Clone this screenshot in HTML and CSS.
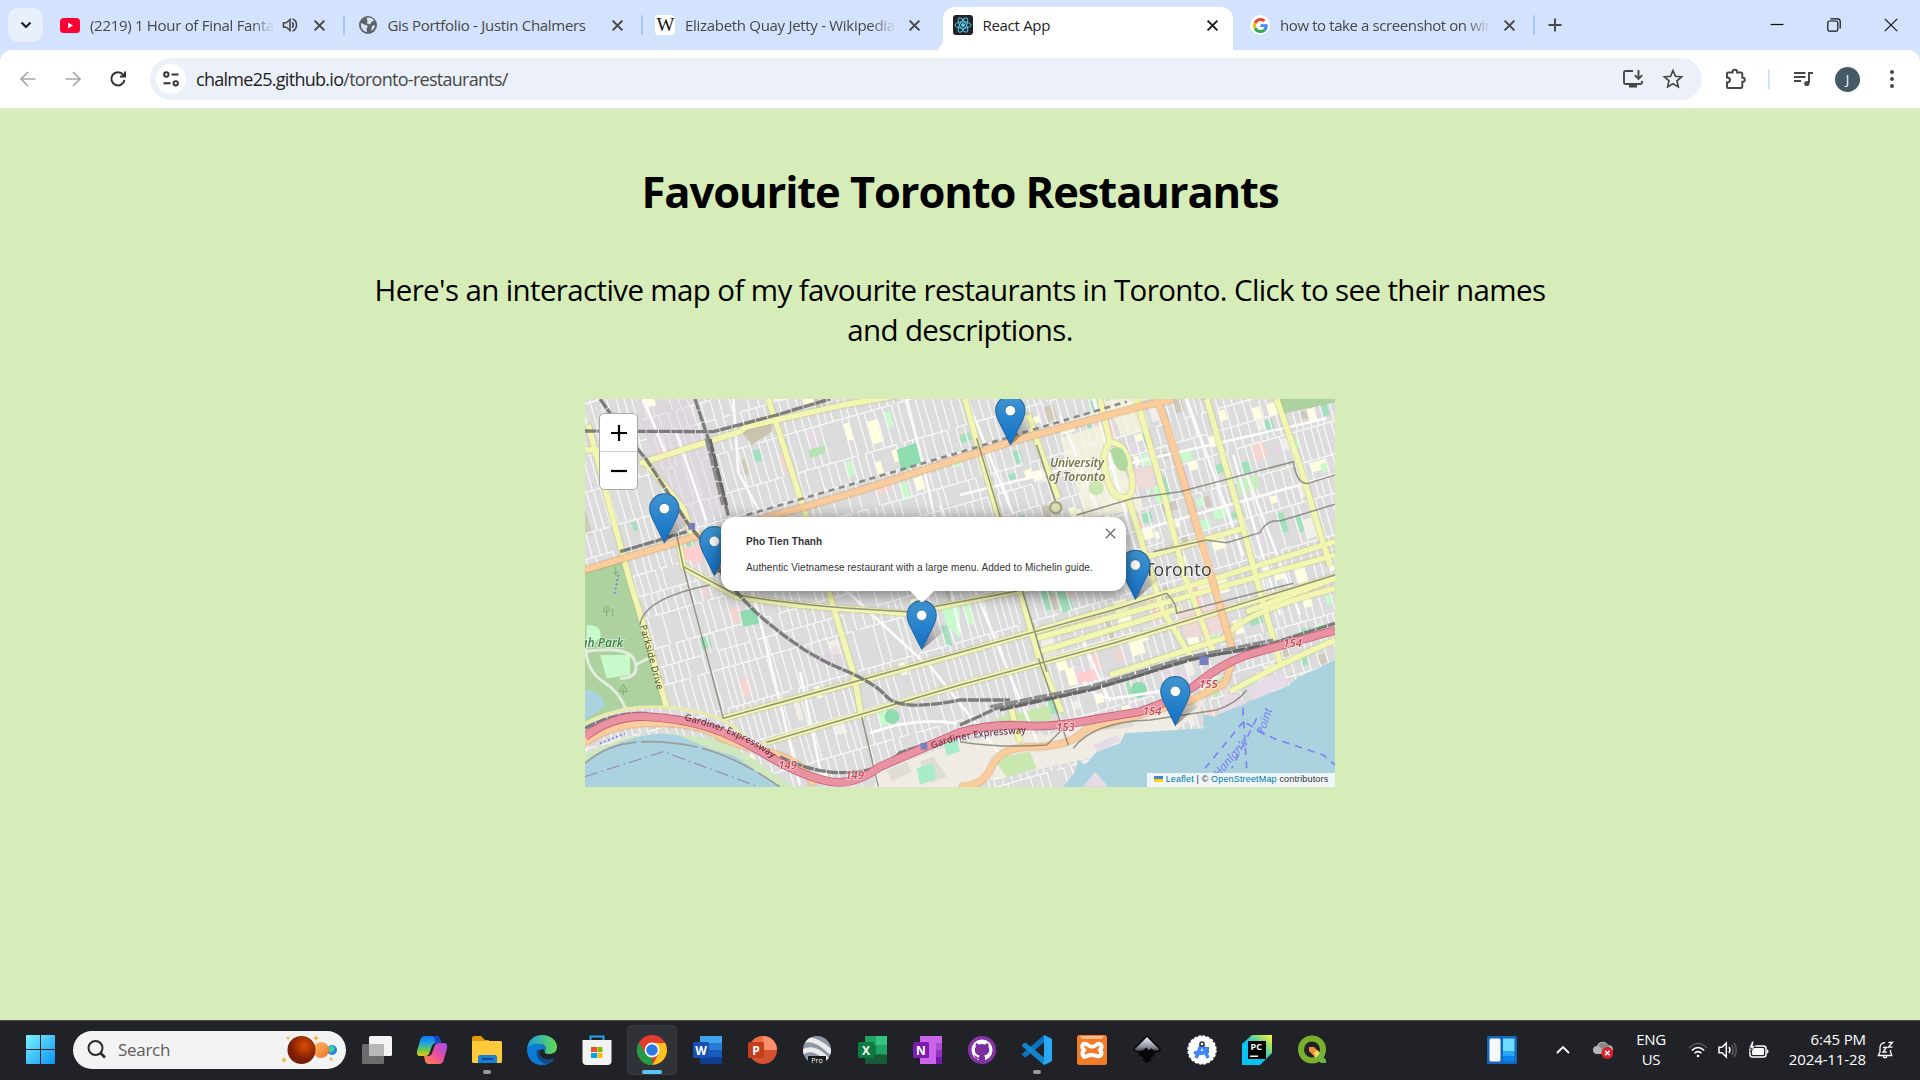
FILE: index.html
```html
<!DOCTYPE html>
<html lang="en">
<head>
<meta charset="utf-8">
<title>React App</title>
<link rel="stylesheet" href="styles.css">
</head>
<body>
<svg class="defs" width="0" height="0" aria-hidden="true">
  <defs>
    <symbol id="x" viewBox="0 0 12 12"><path d="M1.5 1.5l9 9M10.5 1.5l-9 9" fill="none" stroke="currentColor" stroke-width="1.9"/></symbol>
    <linearGradient id="pinfill" x1="0" y1="0" x2="0" y2="1"><stop offset="0" stop-color="#3f96d2"/><stop offset="1" stop-color="#126fc6"/></linearGradient>
    <linearGradient id="pinline" x1="0" y1="0" x2="0" y2="1"><stop offset="0" stop-color="#2e6c97"/><stop offset="1" stop-color="#2367ac"/></linearGradient>
    <linearGradient id="shade" x1="0" y1="1" x2="1" y2="0"><stop offset="0" stop-color="#000" stop-opacity=".45"/><stop offset=".75" stop-color="#000" stop-opacity="0"/></linearGradient>
    <symbol id="pin" viewBox="0 0 50 42" overflow="visible">
      <path d="M12.5 41L22 20Q32 8 37 15Q38 20 28 28Z" fill="url(#shade)"/>
      <path d="M12.5.5C5.8.5.5 5.8.5 12.6c0 2.700 1.200 5.900 2.300 8.400L12.500 40.500 22.200 21c1.100-2.500 2.300-5.700 2.300-8.400C24.500 5.800 19.200.5 12.500.5z" fill="url(#pinfill)" stroke="url(#pinline)"/>
      <circle cx="12.500" cy="12.600" r="4.300" fill="#fff" stroke="#2e6c97" stroke-width=".6"/>
    </symbol>
    <linearGradient id="win" x1="0" y1="0" x2="1" y2="1"><stop offset="0" stop-color="#7df3ff"/><stop offset="1" stop-color="#0a94f5"/></linearGradient>
  </defs>
</svg>

<header class="tabstrip">
  <button class="tab-search"><svg width="12" height="12" viewBox="0 0 12 12"><path d="M1.500 3.500L6 8l4.500-4.500" fill="none" stroke="#1f1f1f" stroke-width="2.200"/></svg></button>
  <div class="tab">
    <span class="fav"><svg width="20" height="15" viewBox="0 0 20 15"><rect width="20" height="15" rx="3.500" fill="#ff0033"/><path d="M8 4.500v6l5-3z" fill="#fff"/></svg></span>
    <span class="tab-title short fade">(2219) 1 Hour of Final Fantasy</span>
    <svg class="audio" width="16" height="16" viewBox="0 0 16 16" fill="none" stroke="#474747" stroke-width="1.600"><path d="M1.500 5.800h2.800L8 2.500v11L4.300 10.200H1.500zM10.300 5.300q2 2.700 0 5.400M10.500 2q4 1.500 4 6t-4 6"/></svg>
    <svg class="close" width="13" height="13"><use href="#x"/></svg>
  </div>
  <div class="tab">
    <span class="fav"><svg width="18" height="18" viewBox="0 0 18 18"><circle cx="9" cy="9" r="9" fill="#5f6368"/><path d="M2 7c2 .5 3 2 5 2 2.500 0 1.500 3 .5 3.500L8 16C4 15.500 1.500 12 2 7zM7.500 2c3-1 6 0 7.500 2.500L12.500 6 11 8.500 8 7.500 8.500 5z M13 10l3-1c0 3-2 5-4 6z" fill="#d3e3fd"/></svg></span>
    <span class="tab-title">Gis Portfolio - Justin Chalmers</span>
    <svg class="close" width="13" height="13"><use href="#x"/></svg>
  </div>
  <div class="tab nosep">
    <span class="fav wiki">W</span>
    <span class="tab-title fade">Elizabeth Quay Jetty - Wikipedia</span>
    <svg class="close" width="13" height="13"><use href="#x"/></svg>
  </div>
  <div class="tab active nosep">
    <span class="fav react"><svg width="18" height="18" viewBox="-9 -9 18 18" fill="none" stroke="#61dafb" stroke-width=".9"><circle r="1.400" fill="#61dafb"/><ellipse rx="8" ry="3.200"/><ellipse rx="8" ry="3.200" transform="rotate(60)"/><ellipse rx="8" ry="3.200" transform="rotate(120)"/></svg></span>
    <span class="tab-title">React App</span>
    <svg class="close" width="13" height="13"><use href="#x"/></svg>
  </div>
  <div class="tab">
    <span class="fav google"><svg width="15" height="15" viewBox="0 0 48 48"><path fill="#ea4335" d="M24 9.500c3.500 0 6.700 1.200 9.200 3.600l6.900-6.900C35.900 2.400 30.500 0 24 0 14.600 0 6.500 5.400 2.600 13.200l8 6.200C12.400 13.700 17.700 9.500 24 9.500z"/><path fill="#4285f4" d="M47 24.600c0-1.600-.2-3.100-.4-4.600H24v9h12.900c-.6 3-2.300 5.500-4.800 7.200l7.700 6C44.400 38 47 31.800 47 24.600z"/><path fill="#fbbc05" d="M10.500 28.600a14.500 14.500 0 0 1 0-9.200l-8-6.200a24 24 0 0 0 0 21.600z"/><path fill="#34a853" d="M24 48c6.500 0 11.900-2.100 15.900-5.800l-7.700-6c-2.200 1.500-4.900 2.300-8.200 2.300-6.300 0-11.600-4.200-13.500-9.900l-8 6.200C6.500 42.600 14.600 48 24 48z"/></svg></span>
    <span class="tab-title tight fade">how to take a screenshot on windows</span>
    <svg class="close" width="13" height="13"><use href="#x"/></svg>
  </div>
  <svg class="newtab" width="14" height="14" viewBox="0 0 14 14"><path d="M7 .5v13M.5 7h13" stroke="#474747" stroke-width="1.900"/></svg>
  <div class="winbtns">
    <svg width="14" height="14" viewBox="0 0 14 14"><path d="M.5 6.500h13" stroke="#111" stroke-width="1.200"/></svg>
    <svg width="14" height="14" viewBox="0 0 14 14" fill="none" stroke="#111" stroke-width="1.200"><rect x=".8" y="3" width="10" height="10.200" rx="1.800"/><path d="M3.500.8h7q2.700 0 2.700 2.700v7"/></svg>
    <svg width="14" height="14" viewBox="0 0 14 14"><path d="M.8.8l12.400 12.400M13.200.8L.8 13.200" stroke="#111" stroke-width="1.200"/></svg>
  </div>
</header>

<nav class="toolbar">
  <div class="navbtns">
    <svg width="20" height="20" viewBox="0 0 20 20" fill="none" stroke="#a8a8a8" stroke-width="1.700"><path d="M17.500 10H3M10 3l-7 7 7 7"/></svg>
    <svg width="20" height="20" viewBox="0 0 20 20" fill="none" stroke="#a8a8a8" stroke-width="1.700"><path d="M2.500 10H17M10 3l7 7-7 7"/></svg>
    <svg width="20" height="20" viewBox="0 0 20 20" fill="none" stroke="#333" stroke-width="2"><path d="M16.500 11A6.600 6.600 0 1 1 15 5.500l1.800 1.900M17 2.500v5h-5"/></svg>
  </div>
  <div class="omnibox">
    <span class="siteinfo"><svg width="18" height="18" viewBox="0 0 18 18" fill="none" stroke="#333" stroke-width="1.900"><circle cx="4.300" cy="4.500" r="2.200"/><path d="M9.500 4.500h7M1.500 13.300h7"/><circle cx="13.700" cy="13.300" r="2.200"/></svg></span>
    <span class="url">chalme25.github.io<i>/toronto-restaurants/</i></span>
    <svg class="install" width="22" height="22" viewBox="0 0 22 22" fill="none" stroke="#474747" stroke-width="1.900"><path d="M11 3H3.500Q2 3 2 4.500v10Q2 16 3.500 16h15q1.500 0 1.500-1.500V13M16.500 2v8.500M12.800 7.200l3.700 3.700 3.700-3.700"/><path d="M7 16h8v3.500H7z" fill="#474747" stroke="none"/></svg>
    <svg width="22" height="22" viewBox="0 0 22 22" fill="none" stroke="#474747" stroke-width="1.700"><path d="M11 2.700l2.500 5.600 6.100.6-4.600 4 1.300 6L11 15.800l-5.300 3.100 1.300-6-4.600-4 6.100-.6z"/></svg>
  </div>
  <svg class="puzzle" width="24" height="24" viewBox="0 0 24 24" fill="none" stroke="#474747" stroke-width="2"><path d="M4 5.500h4.500V5a2.300 2.300 0 0 1 4.600 0v.5H17q1.300 0 1.300 1.300v4h.5a2 2 0 0 1 0 4h-.5v4.900q0 1.300-1.300 1.300H4q-1 0-1-1v-4.500q3-.2 3-2.500T3 10.500V6.500q0-1 1-1z"/></svg>
  <span class="tsep"></span>
  <svg class="media" width="20" height="20" viewBox="0 0 20 20" fill="none" stroke="#474747" stroke-width="2"><path d="M1 4h11.500M1 8h11.500M1 12h7M16 14V4h4"/><circle cx="13.800" cy="14.500" r="2.600" fill="#474747" stroke="none"/></svg>
  <span class="avatar">J</span>
  <svg class="dots" width="6" height="20" viewBox="0 0 6 20" fill="#474747"><circle cx="3" cy="3" r="2"/><circle cx="3" cy="10" r="2"/><circle cx="3" cy="17" r="2"/></svg>
</nav>

<main class="page">
  <h1>Favourite Toronto Restaurants</h1>
  <p class="lead">Here's an interactive map of my favourite restaurants in Toronto. Click to see their names<br>and descriptions.</p>
  <section class="map">
    <svg class="tiles" width="750" height="388" viewBox="15 12 2250 1164">
      <g class="base">
      <rect x="0" y="0" width="2300" height="1200" fill="#e3e1de"/>
      <g id="streets" transform="rotate(-16)"></g>
      <g fill="#f7f6df" opacity=".8"><path d="M1440 130l120-40 130 250-170 30z"/><path d="M1570 20l110-20 30 100-80 20z"/></g>
      <g fill="#efdada"><path d="M1660 225l60-15 5 70-50 5z"/><path d="M1790 650l150-30 10 90-130 20z"/><path d="M310 460l60-15-5 60-50-10z" fill="#ffcfcf"/><path d="M1490 835l60-15 10 30-60 18z" fill="#ffcfcf"/></g>
      <g fill="#8fdcb0"><path d="M950 165l65-25 15 60-65 30z"/><path d="M480 650l55-15 5 50-50 10z"/><path d="M685 165l50-15v25l-45 15z" fill="#b6e3b6"/><path d="M1085 640l55-20v110l-40-40z" fill="#c8facc"/><path d="M1970 255l60-15 10 40-65 20z" fill="#c8f0c0"/><path d="M2090 12h175v10l-160 35z" fill="#aed1a0"/><circle cx="1677" cy="885" r="24"/><circle cx="936" cy="965" r="22"/></g>
      <path d="M485 110l90-28v28l-60 40z" fill="#c9c3b0"/>
      <path d="M170 40l150-28 130 330-160 60zM700 800l70-50 30 60z" fill="#e0d3e0" opacity=".5"/>
      <path d="M900 1130q300-130 500-110l250-60 220-70-10 60-130 100-300 60-300 66H880z" fill="#f0ece4"/>
      <path d="M1250 970l160-40 10 60-190 10zM1240 1090l110-20 20 50-90 25zM1870 880l60-40-20 70z" fill="#c8e8b0"/>
      <g fill="#e0dcd6"><path d="M920 1125l60-25 15 30-60 30zM1020 1100l40-15 40 60-50 20zM1570 985l90-20v30l-85 10zM1790 940l50-20 10 20-50 20z"/></g>
      <g fill="#a8ecc8"><path d="M1010 1120l50-15 10 45-50 20zM1090 1040l40-12 10 40-40 15z"/></g>
      <path d="M15 530L125 500 180 690 240 880 258 940 140 935 60 960 15 985z" fill="#aed1a0"/>
      <path d="M20 690q50 0 40 40l-40 30zM60 780h90v60l-70 10z" fill="#c8facc"/>
      <g fill="none" stroke="#e3eddd" stroke-width="9"><path d="M15 770Q150 750 165 800T120 850M15 750Q20 830 70 860T140 950M165 810l40-20"/></g>
      <g fill="none" stroke="#85ad78" stroke-width="3"><path d="M107 515v25m-8-10q8 10 16 0M80 640v25m-8-15q-2-15 8-15t8 15zM98 640v25M130 900v-20m-12 10l12-22 12 22z"/></g>
      <path d="M15 885q50 0 60 50l-60 40z" fill="#aad3df"/>
      <path d="M15 1075l130-50 120-10 160 20 100 60 120 85H15z" fill="#cfe8bd"/>
      <path d="M15 1100Q60 1060 160 1030T330 1035 460 1080L600 1176H15z" fill="#aad3df"/>
      <path d="M2265 795l-115 55-20 20-110 45-30 10-90 40-30-8v43l-235 15-15 30-70 25-35 40-20-15-10 35-35 46H2265z" fill="#aad3df"/>
      <path d="M2020 915l-20-35 95-50 40 30zM1940 880l60 45-80 30zM1510 1175l35-45 40 45zM1540 1050l70-30 15 15-70 35z" fill="#e6dbe6"/>
      <path d="M15 1105Q90 1040 200 1040T400 1070 600 1176" fill="none" stroke="#9c9c9c" stroke-width="5" stroke-dasharray="170 14"/>
      <path d="M15 1145L250 1070 535 1175" fill="none" stroke="#9b91c0" stroke-width="4" stroke-dasharray="40 12 5 12"/>
      <path d="M60 1045l75-30M115 540l-12 60" fill="none" stroke="#6779e8" stroke-width="5" stroke-dasharray="5 8"/>
      <g fill="none" stroke="#7f84ef" stroke-width="5" stroke-dasharray="22 18"><path d="M1875 1120L1990 980 1988 930 2000 1120M2000 985L2080 1030 2230 1080 2265 1110M2030 970l-75 150"/></g>

      <g class="road minor"><path d="M190 12l65 160M460 12l15 220 70 130M980 12l50 200 110 500M285 100l95 280M490 470l170 700M660 830l70 340M770 560l270 250M1180 60l120 300M1080 330l300 730M1440 60l120 300M1540 12l140 500M1820 12l170 470M1960 180l140 480M1140 300l400-100M1540 230l700-160M2000 240l160 420M1500 720l90 200M1800 880l-200 30q-60 0-90-50M2265 240l-600 170M870 1015q130-50 260-30M880 1100l15 76M1040 800l230 290"/></g>
      <g class="road yellow">
        <path d="M15 165h50M25 90L80 300 150 560 200 720 260 940M180 205L480 110 500 95 790 30 960 0M565 12l110 340 90 300 60 200 20 120M190 195L310 340 340 430"/>
        <path d="M1155 12l30 110 70 240 120 420 70 170M1345 60l30 90 60 160M1560 12l30 130q50 0 60 80 20 70-10 85-40 10-60-60-20-70 10-105M1645 310l100 330 90 150M1670 12l80 280 60 240 90 240M1880 12l100 350 60 230 60 210M2090 12l70 200 90 300"/>
        <path d="M430 970L1140 775 1600 640 1940 540 2265 440M560 1042L1140 870 1600 745 2265 545M1370 730L2265 480M1380 770L1800 640M1590 840L1960 720M2265 735L2100 810 1950 890M1290 930l30 110M1650 500L1990 400M295 430l15 85 160 90 180 25 330 25 400-80M2000 650l265-100M1930 730q60-80 335-150"/>
      </g>
      <g class="road ramp"><path d="M15 985Q140 920 290 940T480 1015 560 1042L600 1035"/></g>
      <g class="road orange">
        <path d="M15 525L330 430 660 340 830 290 1140 190 1310 135 1660 40 1780 12M1730 12l30 78 60 200 50 170 40 140 45 155"/>
        <path d="M15 1045Q90 985 220 985T400 1015 560 1070 700 1170M1140 1175q70 0 95-60t130-60 150-50l180-50 140-40 100-50 20-60"/>
      </g>
      <g class="tram"><path d="M290 420l20 95 120 455M310 515l160 85q200 35 510 50l400-75 210-65 70-20M1140 550l400-100 M180 690q10-80 210-120M430 970l700-195 470-130 160-50q30 30 30 60l350-90M560 1042L1140 870 1600 745 2265 540M845 965l50 210M1190 130l210 700M1370 150l60 180M1375 790l90 260M1490 360L1660 310 1800 290 2140 200q10 70 45 65l80-25M1720 470l160-35 60 8 100-30q20-40 60-35l165-50M1140 1040q120 20 260 10l60-60M1480 1060q60-80 230-85l200-30q60-20 90-60"/></g>
      <g class="rail">
        <path d="M60 12L130 110 200 195 330 395 360 430M345 12l40 120 60 230M15 108L400 110 590 60 750 12M120 470l200-60M360 430Q440 580 560 680T780 820 920 905 1140 915H1290M1140 990l110-50 200-40 200-50 180-60 200-30 235-75M15 1000Q110 950 200 955M600 1085q100 50 200 48t160-60l180-60"/>
      </g>
      <g class="yard"><path d="M378 130l50 200M1230 935l300-60 290-88 260-52"/></g>
      <g class="yard dark"><path d="M390 132l50 200M1260 945l280-62 290-88 220-45"/></g>
      <path d="M500 360L1140 172 1340 110 1640 20" fill="none" stroke="#8d8a85" stroke-width="8" stroke-dasharray="18 14"/>
      <path class="hw-case" d="M15 1025Q100 960 200 965T380 995 560 1080 740 1158 900 1115L1140 1012Q1240 985 1330 992T1560 970L1680 950Q1800 910 1860 860T2000 780L2265 706"/>
      <path class="hw" d="M15 1025Q100 960 200 965T380 995 560 1080 740 1158 900 1115L1140 1012Q1240 985 1330 992T1560 970L1680 950Q1800 910 1860 860T2000 780L2265 706"/>
      <g fill="#7880bb"><rect x="325" y="384" width="20" height="20"/><rect x="1022" y="1044" width="20" height="20"/><rect x="1858" y="784" width="28" height="26"/></g>
      <circle cx="1427" cy="338" r="17" fill="#e0e0b8" stroke="#a9a984" stroke-width="7"/>
      <circle cx="1548" cy="278" r="23" fill="#c8e8b0"/>
      <path d="M1590 165q30-20 45 10t5 50q-20 10-35-15z" fill="#aed9a0"/>

      <defs>
        <path id="parkside" d="M180 692L232 886"/>
        <path id="gard1" d="M313 976Q470 1010 585 1095"/>
        <path id="gard2" d="M1058 1062Q1130 1025 1345 1014"/>
      </defs>
      <g class="label">
        <text class="uni" x="1491" y="215" text-anchor="middle" textLength="162">University</text>
        <text class="uni" x="1491" y="259" text-anchor="middle" textLength="170">of Toronto</text>
        <text class="city" x="1694" y="543" textLength="201">Toronto</text>
        <text class="park" x="-34" y="755" textLength="164">High Park</text>
        <text class="street"><textPath href="#parkside" textLength="200">Parkside Drive</textPath></text>
        <text class="street red"><textPath href="#gard1" textLength="290">Gardiner Expressway</textPath></text>
        <text class="street red"><textPath href="#gard2" textLength="286">Gardiner Expressway</textPath></text>
        <text class="exit" x="595" y="1123">149</text><text class="exit" x="796" y="1153">149</text>
        <text class="exit" x="1428" y="1009">153</text><text class="exit" x="1688" y="960">154</text>
        <text class="exit" x="1857" y="880">155</text><text class="exit" x="2110" y="757">154</text>
        <text class="ferry" transform="translate(1916 1150) rotate(-50)">Hanlan's</text>
        <text class="ferry" transform="translate(2052 1022) rotate(-72)">Point</text>
      </g>
      </g>
      <g>
        <use href="#pin" x="1245.500" y="1" width="182" height="153"/>
        <use href="#pin" x="207.500" y="295" width="182" height="153"/>
        <use href="#pin" x="357.500" y="393" width="182" height="153"/>
        <use href="#pin" x="1620.500" y="464" width="182" height="153"/>
        <use href="#pin" x="979.500" y="615" width="182" height="153"/>
        <use href="#pin" x="1740.500" y="843" width="182" height="153"/>
      </g>
    </svg>
    <div class="zoom"><span><svg width="16" height="16"><path d="M0 8h16M8 0v16" stroke="#000" stroke-width="2.200"/></svg></span><span><svg width="16" height="16"><path d="M0 8h16" stroke="#000" stroke-width="2.200"/></svg></span></div>
    <div class="popup">
      <svg class="popclose" width="11" height="11" viewBox="0 0 11 11"><path d="M.8.8l9.400 9.400M10.200.8L.8 10.200" stroke="#757575" stroke-width="1.500"/></svg>
      <strong>Pho Tien Thanh</strong>
      <p>Authentic Vietnamese restaurant with a large menu. Added to Michelin guide.</p>
      <span class="tip"></span>
    </div>
    <div class="attribution"><svg width="9" height="6"><path fill="#4c7be1" d="M0 0h9v3H0z"/><path fill="#ffd500" d="M0 3h9v3H0z"/></svg> <a>Leaflet</a> | © <a>OpenStreetMap</a> contributors</div>
  </section>
</main>

<footer class="taskbar">
  <svg class="start" width="29" height="29" viewBox="0 0 29 29" fill="url(#win)"><path d="M1 0h13v14H0V1q0-1 1-1zM15 0h13q1 0 1 1v13H15zM0 15h14v14H1q-1 0-1-1zM15 15h14v13q0 1-1 1H15z"/></svg>
  <div class="search">
    <svg width="19" height="19" viewBox="0 0 19 19" fill="none" stroke="#2b2b2b" stroke-width="2"><circle cx="8.500" cy="8" r="7"/><path d="M13.500 13l4.500 4.500" stroke-width="2.600"/></svg>
    <span>Search</span>
    <svg class="planets" width="56" height="30" viewBox="0 0 56 30"><defs><radialGradient id="mars" cx=".6" cy=".35"><stop offset="0" stop-color="#e04d00"/><stop offset="1" stop-color="#7a1d05"/></radialGradient><linearGradient id="sun" x1="0" x2="1" y2="1"><stop offset="0" stop-color="#ffc560"/><stop offset="1" stop-color="#ee6a2c"/></linearGradient></defs><circle cx="51" cy="15" r="5" fill="#2c7fe0"/><path d="M47 13q4-5 7 0l-1 3-4 2z" fill="#3ad0a0"/><circle cx="40" cy="15" r="8" fill="url(#sun)"/><circle cx="20.500" cy="15" r="14" fill="url(#mars)"/><path d="M3 22l1 2 2 1-2 1-1 2-1-2-2-1 2-1zM35 0l1 2 2 1-2 1-1 2-1-2-2-1 2-1zM7 1l.7 1.300L9 3l-1.300.7L7 5l-.7-1.300L5 3l1.300-.7zM50 22l.7 1.300L52 24l-1.300.7L50 27l-.7-2.300L48 24l1.300-.7z" fill="#e9b93c"/></svg>
  </div>
  <div class="apps">
    <span class="app"><svg width="30" height="28" viewBox="0 0 30 28"><rect x="7" width="23" height="20" rx="1.500" fill="#f4f4f4"/><rect y="8" width="22" height="20" rx="1.500" fill="#7a7a7a" opacity=".85"/><path d="M7 8h15v12H7z" fill="#b8b8b8"/></svg></span>
    <span class="app"><svg width="30" height="28" viewBox="0 0 30 28"><defs><linearGradient id="cpa" x1="0" y1="0" x2="0" y2="1"><stop offset="0" stop-color="#1673e8"/><stop offset=".35" stop-color="#1aa5e8"/><stop offset=".7" stop-color="#6bc84c"/><stop offset="1" stop-color="#f2c413"/></linearGradient><linearGradient id="cpb" x1="1" y1="0" x2="0" y2="1"><stop offset="0" stop-color="#a04cf0"/><stop offset=".5" stop-color="#e94f9c"/><stop offset="1" stop-color="#ff8c3a"/></linearGradient></defs><path d="M8 0h12q2 0 3 3l1 4h-5q-3 0-4 3l-3 8q-1 2-4 2H3q-4 0-3-5L3 5q1-5 5-5z" fill="url(#cpa)"/><path d="M22 28H11q-2 0-3-3l-1-5h5q2 0 3-3l3-8q1-2 4-2h5q4 0 3 5l-3 11q-1 5-5 5z" fill="url(#cpb)"/><path d="M15 0h5q2 0 3 3l1 4h-4q-3 0-2-3 0-3-3-4z" fill="#1745c8"/></svg></span>
    <span class="app run"><svg width="30" height="27" viewBox="0 0 30 27"><path d="M0 2q0-2 2-2h7l4 4h4v6H0z" fill="#e39b0b"/><rect y="5" width="30" height="22" rx="1.500" fill="#ffc93c"/><path d="M6 21q0-2 2-2h15q2 0 2 2v6H6z" fill="#1c7fd6"/><path d="M10 22h11v2H10z" fill="#0b4f94"/></svg></span>
    <span class="app"><svg width="30" height="30" viewBox="0 0 30 30"><defs><linearGradient id="ea" x1="0" x2="1"><stop offset="0" stop-color="#1b9de2"/><stop offset="1" stop-color="#64dc50"/></linearGradient></defs><path d="M0 14C1 5 7 0 15 0c9 0 15 6 15 12 0 5-4 7-8 7-3 0-5-1-4-3 2-4-1-7-5-7-6 0-11 2-13 5z" fill="url(#ea)"/><path d="M0 14c2-4 7-6 12-5 5 0 7 3 6 7-2-3-6-2-6 2 0 5 5 8 10 7l5-1c-3 4-7 6-12 6C6 30 0 24 0 14z" fill="#0c7bd6"/><path d="M10 15c-2 6 2 12 9 14 4-1 7-4 8-6-6 3-14 1-15-5q0-3 2-4z" fill="#114a8b"/></svg></span>
    <span class="app"><svg width="30" height="30" viewBox="0 0 30 30"><path d="M8.500 7V1.500h13V7" fill="none" stroke="#22a8ea" stroke-width="2"/><path d="M.5 5h29v21q0 4-4 4h-21q-4 0-4-4z" fill="#f3f3f3"/><path d="M9 12h6v5H9z" fill="#f25022"/><path d="M15.500 12h5v5h-5z" fill="#7fba00"/><path d="M9 18h6v5H9z" fill="#00a4ef"/><path d="M15.500 18h5v5h-5z" fill="#ffb900"/></svg></span>
    <span class="app current"><svg width="30" height="30" viewBox="-15 -15 30 30"><circle r="15" fill="#e33b2e"/><path d="M-13-7.500L-6.500 3.800 0 7.500 1 15A15 15 0 0 1-13-7.500z" fill="#249a45"/><path d="M0-7h13.200A15 15 0 0 1 .5 15L6.500 3.800z" fill="#fcc31e"/><circle r="7.400" fill="#fff"/><circle r="5.800" fill="#2a7bea"/></svg></span>
    <span class="app"><svg width="29" height="28" viewBox="0 0 29 28"><path d="M7 0h22v7H7z" fill="#41a5ee"/><path d="M7 7h22v7H7z" fill="#2b7cd3"/><path d="M7 14h22v7H7z" fill="#185abd"/><path d="M7 21h22v7H7z" fill="#103f91"/><rect y="6" width="16" height="16" rx="1.500" fill="#1a50b4"/><text x="8" y="18.500">W</text></svg></span>
    <span class="app"><svg width="29" height="28" viewBox="0 0 29 28"><circle cx="15" cy="14" r="14" fill="#d35230"/><path d="M15 0a14 14 0 0 1 14 14H15z" fill="#ff8f6b"/><path d="M15 0A14 14 0 0 0 1 14h14z" fill="#ed6c47"/><rect y="6" width="16" height="16" rx="1.500" fill="#c43e1c"/><text x="8" y="18.500">P</text></svg></span>
    <span class="app"><svg width="28" height="28" viewBox="0 0 28 28"><defs><clipPath id="ec"><circle cx="14" cy="14" r="14"/></clipPath></defs><g clip-path="url(#ec)"><path d="M0 0h28v28H0z" fill="#8d97a5"/><path d="M-2 6Q10-2 30 18M-2 17Q12 7 28 28" fill="none" stroke="#ececec" stroke-width="5"/><path d="M5 20h18v8H5z" fill="#1a1a1a"/></g><text class="pro" x="14" y="26.500">Pro</text></svg></span>
    <span class="app"><svg width="29" height="28" viewBox="0 0 29 28"><path d="M7 0h11v9H7z" fill="#21a366"/><path d="M18 0h11v9H18z" fill="#33c481"/><path d="M7 9h22v10H7z" fill="#107c41"/><path d="M18 9h11v9H18z" fill="#21a366"/><path d="M7 19h22v9H7z" fill="#185c37"/><rect y="6" width="16" height="16" rx="1.500" fill="#0f7a40"/><text x="8" y="18.500">X</text></svg></span>
    <span class="app"><svg width="29" height="28" viewBox="0 0 29 28"><path d="M7 0h22v28H7z" fill="#ca64ea"/><path d="M23 7h6v7h-6z" fill="#ae4bd5"/><path d="M23 14h6v7h-6z" fill="#9332bf"/><path d="M23 21h6v7h-6z" fill="#7719aa"/><rect y="6" width="16" height="16" rx="1.500" fill="#7a1bae"/><text x="8" y="18.500">N</text></svg></span>
    <span class="app"><svg width="28" height="28" viewBox="0 0 28 28"><circle cx="14" cy="14" r="14" fill="#8534a8"/><circle cx="14" cy="14" r="10.500" fill="#fff"/><path d="M8 7l3 1.500q3-.8 6 0L20 7q1 2 .4 3.800 1.200 1.700.8 4-.7 4-5 4.600.8.800.8 2V26h-6v-3q-3 .5-4-2l-1-1.500q2-.3 3 1.500.8 1 2 .5 0-1.300.8-2-4.300-.6-5-4.700-.3-2.300 1-4Q7.400 9 8 7z" fill="#7b2f9d"/></svg></span>
    <span class="app run"><svg width="30" height="30" viewBox="0 0 30 30"><path d="M22 0v7.500L4 22q-1 .6-2 0L.5 20.500q-1-1 0-2z" fill="#0b74be"/><path d="M22 30v-7.500L4 8q-1-.6-2 0L.5 9.500q-1 1 0 2z" fill="#1186cf"/><path d="M22 0l7 3.300q1 .5 1 1.600v20.200q0 1.100-1 1.600L22 30q-2-2 0-4z" fill="#29a8f3"/></svg></span>
    <span class="app"><svg width="30" height="30" viewBox="0 0 30 30"><rect width="30" height="30" rx="2.500" fill="#f07c29"/><path d="M3 1h24l-2 3H5z" fill="#fbb98a"/><path d="M10 9.500c-5-3-6 3-3 5.500-3 4-1 8 3 6s6-1 10 0 6-2 3-6c3-3 1-8-3-5.500-4 3-6 3-10 0z" fill="none" stroke="#fff" stroke-width="4"/></svg></span>
    <span class="app"><svg width="28" height="28" viewBox="0 0 28 28"><defs><linearGradient id="ink" x1="0" y1="0" x2="0" y2="1"><stop offset="0" stop-color="#f2f2f7"/><stop offset=".7" stop-color="#8b8f9c"/><stop offset="1" stop-color="#333"/></linearGradient></defs><path d="M14 0q1 0 2 1l11 11q2 3-1 4-5 1-5 3t-4 3l2 2-5 3-5-3 2-2-6-3q3-2-1-3-5-1-3-4L12 1q1-1 2-1z" fill="#08080a"/><path d="M14 1l12.500 12.500q-5 3-8-1l-3 2-2-3-4 3q-4 2-8-1z" fill="url(#ink)"/></svg></span>
    <span class="app"><svg width="30" height="30" viewBox="0 0 30 30"><circle cx="15" cy="15" r="13.700" fill="#fff" stroke="#fff" stroke-width="2" stroke-dasharray="3 1.300"/><path d="M18 12h4v6h-4z" fill="#2ba24c"/><path d="M15 8L9 23M15 8l6 15M7 17q8 4 14-3" fill="none" stroke="#4285f4" stroke-width="3.600"/><circle cx="15" cy="9" r="2" fill="#fff" stroke="#333" stroke-width="1.500"/></svg></span>
    <span class="app"><svg width="30" height="30" viewBox="0 0 30 30"><defs><linearGradient id="pc" x1="0" y1="1" x2="1" y2="0"><stop offset=".45" stop-color="#07c3f2"/><stop offset=".8" stop-color="#a8e05f"/><stop offset="1" stop-color="#fcf84a"/></linearGradient></defs><path d="M10 0h20v18L18 30H0V9z" fill="url(#pc)"/><path d="M6 6h18v18H6z" fill="#000"/><path d="M8 20.500h8V22H8z" fill="#fff"/><text class="pc" x="14.300" y="15">PC</text></svg></span>
    <span class="app"><svg width="30" height="30" viewBox="0 0 30 30"><circle cx="15" cy="14.500" r="11" fill="none" stroke="#7ab02c" stroke-width="6"/><path d="M17 16l5 1 7 8v3h-5l-7-6z" fill="#6cb33f"/><path d="M12 12h5l5 5-4 5-6-6z" fill="#f0913a"/><path d="M17 18l3-3 3 3-4 5z" fill="#f3e05a"/></svg></span>
  </div>
  <div class="tray">
    <svg class="widgets" width="30" height="28" viewBox="0 0 30 28"><rect width="30" height="28" rx="1.500" fill="#1467ba"/><rect x="2.500" y="2.500" width="11" height="23" rx="1.500" fill="#f7f7f7"/><path d="M16 2.500h11.500V15H16z" fill="#6fdbff"/><path d="M16 15h11.500v5H16z" fill="#2aa6f7"/><path d="M16 20h11.500v5.500H16z" fill="#0a84ec"/></svg>
    <svg class="chev" width="14" height="9" viewBox="0 0 14 9"><path d="M1 8l6-6 6 6" fill="none" stroke="#fff" stroke-width="1.800"/></svg>
    <svg class="cloud" width="20" height="18" viewBox="0 0 20 18"><path d="M4 13a4 4 0 0 1 0-8 6 6 0 0 1 11-1 4 4 0 0 1 1 9z" fill="#b5b5b5"/><path d="M5 4.500a6 6 0 0 1 10-.5l2 2-8 2z" fill="#8a8a8a"/><circle cx="14.300" cy="12" r="6" fill="#d9212c"/><path d="M12 9.700l4.600 4.600M16.600 9.700L12 14.300" stroke="#fff" stroke-width="1.500"/></svg>
    <div class="lang">ENG<br>US</div>
    <svg class="wifi" width="20" height="16" viewBox="0 0 20 16" fill="none" stroke="#fff" stroke-width="1.600"><path d="M1 6q9-9 18 0" stroke="#5a5b5e"/><path d="M3.800 8.500q6.200-6 12.400 0M6.500 11.300q3.500-3.400 7 0"/><circle cx="10" cy="14" r="1.300" fill="#fff" stroke="none"/></svg>
    <svg class="vol" width="20" height="18" viewBox="0 0 20 18" fill="none" stroke="#fff" stroke-width="1.500"><path d="M1 6.300h3L8.300 2v14L4 11.700H1zM11 6q2 3 0 6"/><path d="M13.500 4q3.500 5 0 10M16 2q4.500 7 0 14" stroke="#5a5b5e"/></svg>
    <svg class="bat" width="21" height="17" viewBox="0 0 21 17"><rect x="2" y="5" width="16" height="11" rx="2.500" fill="#202227" stroke="#fff" stroke-width="1.500"/><rect x="4" y="7" width="12" height="7" rx="1" fill="#fff"/><path d="M19 8.500q1.500 0 1.500 2t-1.500 2z" fill="#fff"/><path d="M4 0L1 7h2.500L2.500 11 7.500 4.500H5L6 0z" fill="#fff" stroke="#202227" stroke-width=".8"/></svg>
    <div class="clock">6:45 PM<br>2024-11-28</div>
    <svg class="bell" width="17" height="18" viewBox="0 0 17 18" fill="none" stroke="#fff" stroke-width="1.300"><path d="M8 1.700Q3 2 3 7v4l-1.700 3.500h13.500L13.500 11V9M6 15.500q2 2.500 4 0M6 6.500h3.500L6 11h3.700M11.500 1.500h4l-4 4.700h4"/></svg>
  </div>
</footer>
<script src="map.js"></script>
</body>
</html>
```
FILE: styles.css
```css
* { box-sizing: border-box; }
body {
  margin: 0;
  width: 1920px;
  height: 1080px;
  overflow: hidden;
  display: flex;
  flex-direction: column;
  font-family: "Segoe UI", "Open Sans", "Noto Sans", sans-serif;
  background: #d7edb9;
}
svg { display: block; flex: none; }
.defs { position: absolute; }

/* Tab strip */
.tabstrip { height: 50px; background: #d3e3fd; display: flex; align-items: center; flex: none; }
.tab-search { width: 35px; height: 34px; margin: 0 2.5px 0 8px; border: 0; padding: 0; border-radius: 10px; background: #e9f0fd; display: flex; align-items: center; justify-content: center; }
.tab { position: relative; width: 297.5px; height: 50px; display: flex; align-items: center; padding: 0 17px 0 14.5px; color: #474747; }
.tab:not(.nosep)::after { content: ""; position: absolute; right: -2px; top: 15px; width: 2px; height: 20px; background: #a8c7fa; border-radius: 1px; }
.fav { width: 20px; height: 20px; display: flex; align-items: center; justify-content: center; margin-right: 10px; flex: none; }
.wiki { background: #fff; border-radius: 4px; font: 19px "Liberation Serif", serif; color: #111; letter-spacing: -1px; }
.react { background: #20232a; border-radius: 3px; }
.google { background: #fff; border-radius: 50%; }
.tab-title { width: 211px; margin-right: auto; overflow: hidden; white-space: nowrap; font-size: 15px; letter-spacing: -.3px; line-height: 24px; }
.tab-title.short { width: 184px; }
.tab-title.tight { letter-spacing: -.4px; }
.fade { -webkit-mask-image: linear-gradient(90deg, #000 88%, transparent); mask-image: linear-gradient(90deg, #000 88%, transparent); }
.audio { margin-right: 15px; }
.active { color: #1f1f1f; }
.active::before { content: ""; position: absolute; inset: 7px 3px 0 5px; background: #fff; border-radius: 12px 12px 0 0; }
.active > * { position: relative; z-index: 1; }
.active { background: radial-gradient(circle at 0 0, transparent 12px, #fff 12.5px) -7px 38px / 12px 12px no-repeat; }
.newtab { margin-left: 15px; }
.winbtns { margin-left: auto; display: flex; gap: 43px; padding-right: 22px; }

/* Toolbar */
.toolbar { position: relative; height: 59px; background: #fff; border-radius: 12px 12px 0 0; border-bottom: 1px solid #dfe5df; display: flex; align-items: center; flex: none; }
.toolbar::before { content: ""; position: absolute; inset: 0 0 40px; z-index: -1; background: #d3e3fd; }
.navbtns { display: flex; gap: 25px; padding-left: 17.5px; width: 150px; }
.omnibox { width: 1552px; height: 42px; border-radius: 21px; background: #ecf0f9; display: flex; align-items: center; padding: 0 18px 0 6px; gap: 18px; }
.siteinfo { width: 30px; height: 30px; border-radius: 50%; background: #fff; display: flex; align-items: center; justify-content: center; }
.url { margin-left: -8px; margin-right: auto; font-size: 18px; letter-spacing: -.72px; color: #1f1f1f; line-height: 28px; }
.url i { font-style: normal; color: #474747; }
.puzzle { margin-left: 22px; }
.tsep { width: 2px; height: 20px; background: #d3e3fd; margin: 0 23px 0 20px; }
.avatar { width: 25px; height: 25px; border-radius: 50%; background: #455a64; color: #fff; font: 13px/25px "Open Sans", sans-serif; text-align: center; margin: 0 29px 0 22px; }

/* Page */
.page { height: 911px; flex: none; display: flex; flex-direction: column; align-items: center; text-align: center; color: #000; }
h1 { margin: 53px 0 0; font-size: 43.5px; line-height: 60px; font-weight: 700; letter-spacing: -1.1px; }
.lead { margin: 48px 0 40px; font-size: 29.5px; line-height: 40px; letter-spacing: -.62px; white-space: nowrap; }
.map { position: relative; width: 750px; height: 388px; margin-top: 9px; overflow: hidden; font-family: "Liberation Sans", Arial, sans-serif; text-align: left; }

.base { filter: blur(1.2px); }
.road { fill: none; stroke-linejoin: round; }
.minor { stroke: #fbfbfb; stroke-width: 8; }
.yellow { stroke: #f3f6b0; stroke-width: 16; filter: drop-shadow(0 0 3px #b9ba78); }
.ramp { stroke: #e9eca8; stroke-width: 9; }
.orange { stroke: #fbcd9c; stroke-width: 18; filter: drop-shadow(0 0 3px #c98a48); }
.tram { fill: none; stroke: #7d7d70; stroke-width: 4.5; opacity: .8; }
.rail { fill: none; stroke: #6b6b6b; stroke-width: 10; stroke-dasharray: 34 3; opacity: .85; }
.yard { fill: none; stroke: #8d8d8d; stroke-width: 9; stroke-dasharray: 40 5; }
.dark { stroke: #666; }
.hw-case { fill: none; stroke: #c9607b; stroke-width: 26; }
.hw { fill: none; stroke: #e892a2; stroke-width: 21; }
.label { font-family: "Noto Sans", sans-serif; }
.label text { paint-order: stroke; stroke: rgba(255, 255, 255, .6); stroke-width: 5px; }
.uni { font-size: 36px; font-style: italic; font-weight: 600; fill: #77764c; }
.city { font-size: 53px; fill: #444; }
.park { font-size: 36px; font-style: italic; fill: #3e8a4c; font-weight: 600; }
.label .street { font-size: 28px; fill: #4b4b35; stroke: none; }
.label .red { fill: #5a2233; }
.exit { font-size: 34px; font-style: italic; font-weight: 600; fill: #c94c55; }
.label .ferry { font-size: 36px; font-style: italic; fill: #7d83ee; stroke: none; }
.street-line { fill: none; stroke: #f7f7f7; stroke-width: 4; }

.zoom { position: absolute; left: 14px; top: 14px; width: 39px; height: 77px; border: 1px solid #aaa9a5; border-radius: 5px; background: #fff; }
.zoom span { display: flex; height: 38px; align-items: center; justify-content: center; }
.zoom span:first-child { border-bottom: 1px solid #ccc; }
.popup { position: absolute; left: 136px; top: 118px; width: 405px; height: 74px; background: #fff; border-radius: 14px; box-shadow: 0 3px 16px rgba(0, 0, 0, .5); color: #333; font-size: 10px; line-height: 13px; padding: 18px 25px; }
.popup strong { display: block; letter-spacing: .1px; }
.popup p { margin: 13px 0 0; white-space: nowrap; letter-spacing: .075px; }
.popclose { position: absolute; right: 10px; top: 11px; }
.tip { position: absolute; left: 189px; top: 74px; width: 24px; height: 11px; background: #fff; clip-path: polygon(0 0, 100% 0, 54% 100%, 46% 100%); }
.attribution { position: absolute; right: 0; bottom: 0; width: 188px; height: 14px; padding-left: 7px; white-space: nowrap; background: rgba(255, 255, 255, .8); font-size: 9px; letter-spacing: .16px; line-height: 13px; color: #333; }
.attribution svg { display: inline-block; }
.attribution a { color: #0078a8; }

/* Taskbar */
.taskbar { height: 60px; flex: none; background: #202227; border-top: 1px solid #45484a; display: flex; align-items: center; color: #fff; padding-bottom: 2px; }
.start { margin: 0 18px 0 26px; }
.search { width: 273px; height: 38px; border-radius: 19px; background: #f3f3f3; display: flex; align-items: center; padding: 0 9px 0 14px; color: #5c5c5c; font-size: 17px; letter-spacing: -.3px; }
.search span { margin-left: 12px; }
.planets { margin-left: auto; }
.apps { display: flex; margin-left: 6px; }
.app { position: relative; width: 50px; height: 50px; margin-right: 5px; border-radius: 5px; display: flex; align-items: center; justify-content: center; }
.current { background: #2f3236; box-shadow: inset 0 0 0 1px #3a3d41; }
.run::after, .current::after { content: ""; position: absolute; bottom: 1px; left: 21px; width: 8px; height: 4px; border-radius: 2px; background: #9a9a9a; }
.current::after { left: 15px; width: 20px; background: #5ac4fb; }
.app text { fill: #fff; font: 700 12px "Open Sans", sans-serif; text-anchor: middle; }
.app .pro { font-size: 7px; font-weight: 400; }
.app .pc { font-size: 9px; }
.tray { margin-left: auto; display: flex; align-items: center; font-size: 15px; line-height: 20px; letter-spacing: -.3px; padding-right: 26px; }
.widgets { margin-right: 39px; }
.chev { margin-right: 23px; }
.lang { width: 40px; margin: -2px 17px 0 18px; text-align: center; }
.wifi { margin-right: 10px; }
.vol { margin-right: 10px; }
.clock { width: 84px; margin: -2px 11px 0 13px; text-align: right; white-space: nowrap; letter-spacing: -.1px; }
```
FILE: map.js
```js
// Fills the map with a grid of side streets, lots and small green spaces.
(function () {
  var seed = 7;
  function rnd() { seed = (seed * 16807) % 2147483647; return seed / 2147483647; }
  var lots = ['#c8facc', '#ffffe0', '#ffffe0', '#a5e0be', '#f6d5d0', '#cfcabb', '#e4d9e4', '#f2efe9'];
  var host = document.getElementById('streets');
  var d = '', rects = '';
  for (var v = -20; v < 1900;) {
    var h = 50 + rnd() * 75;
    for (var u = -400; u < 2500;) {
      var w = 18 + rnd() * 13;
      var east = u > 1150;
      if (rnd() < (east ? 0.34 : 0.1)) {
        rects += '<rect x="' + u.toFixed(0) + '" y="' + (v + rnd() * h * 0.5).toFixed(0) + '" width="' + (w * (0.6 + rnd())).toFixed(0) +
          '" height="' + (h * (0.25 + rnd() * 0.4)).toFixed(0) + '" fill="' + lots[Math.floor(rnd() * lots.length)] + '"/>';
      }
      if (rnd() < 0.85) d += 'M' + u.toFixed(0) + ' ' + v.toFixed(0) + 'v' + h.toFixed(0);
      if (rnd() < 0.85) d += 'M' + u.toFixed(0) + ' ' + v.toFixed(0) + 'h' + w.toFixed(0);
      u += w;
    }
    v += h;
  }
  host.innerHTML = '<rect x="-400" y="0" width="3000" height="1900" fill="#dcdcdc"/>' + rects + '<path class="street-line" d="' + d + '"/>';
})();
```
